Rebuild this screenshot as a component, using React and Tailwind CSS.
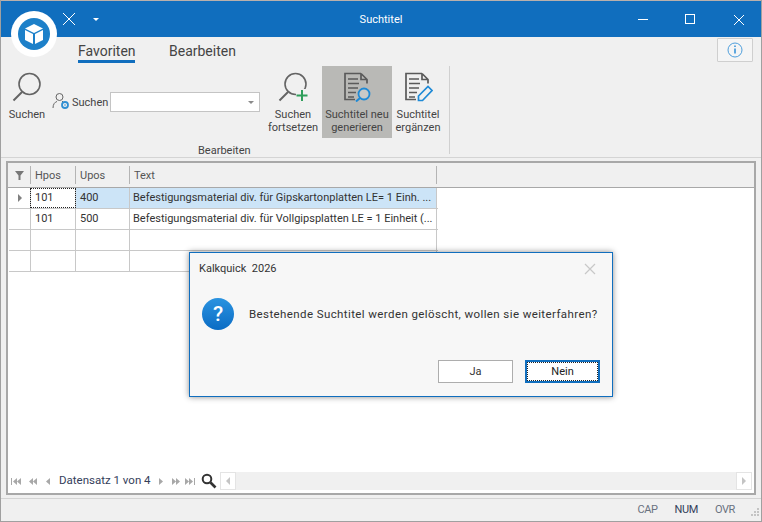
function BigSearch({ plus }) {
  return (
    <svg width="34" height="34" viewBox="0 0 34 34" fill="none">
      <circle cx="19.5" cy="12" r="10.5" stroke="#646464" strokeWidth="1.6" />
      <path d="M12 20L3.500 28.500" stroke="#646464" strokeWidth="2" />
      {plus && <rect x="20" y="17" width="13" height="13" fill="#f0f0f0" />}
      {plus && <path d="M26 18v11M20.500 23.500h11" stroke="#2f9e5b" strokeWidth="2" />}
    </svg>
  );
}

function DocLines() {
  const color = '#5a5a5a';
  return (
    <>
      <path d="M19 1.500H3v26h10M19 1.500l6 6v4M19 1.500v6h6" stroke={color} strokeWidth="1.700" fill="none" />
      <path d="M6 7h10M6 11.500h11M6 16h10M6 20.500h8M6 25h6" stroke={color} strokeWidth="1.500" fill="none" />
    </>
  );
}

function DocSearch() {
  return (
    <svg width="30" height="30" viewBox="0 0 30 30" fill="none">
      <DocLines />
      <circle cx="22" cy="22" r="5.500" fill="#f0f0f0" fillOpacity="0.3" stroke="#1f8ad6" strokeWidth="1.800" />
      <path d="M18 26l-4 3.500" stroke="#1f8ad6" strokeWidth="2" />
    </svg>
  );
}

function DocEdit() {
  return (
    <svg width="30" height="30" viewBox="0 0 30 30" fill="none">
      <DocLines />
      <path d="M15.500 28.500v-4.500l9.500-9.500 4 4-9.500 10z" stroke="#1f8ad6" strokeWidth="1.700" fill="#f0f0f0" />
    </svg>
  );
}

function UserGear() {
  return (
    <svg width="18" height="18" viewBox="0 0 18 18" fill="none">
      <circle cx="7.500" cy="5" r="3.500" stroke="#666" strokeWidth="1" />
      <path d="M1 16c0-4 2-6 4-6.500M10 9.500h1" stroke="#666" strokeWidth="1" />
      <circle cx="13" cy="13" r="3" stroke="#2f8fd3" strokeWidth="1.800" />
      <circle cx="13" cy="13" r="0.800" fill="#2f8fd3" />
    </svg>
  );
}

function RibbonButton({ icon, lines, active, width }) {
  return (
    <div className={`flex flex-col items-center h-[72px] pt-[6px] ${width} ${active ? 'bg-[#b9b9b6]' : ''}`}>
      <div className="h-[34px] flex items-start justify-center">{icon}</div>
      <div className="mt-[2px] text-[11px] leading-[13px] text-center text-[#444] whitespace-nowrap">
        {lines.map((l) => (
          <div key={l}>{l}</div>
        ))}
      </div>
    </div>
  );
}

function Row({ hpos, upos, text, selected, marker }) {
  const bg = selected ? 'bg-[#cce4f7]' : 'bg-white';
  return (
    <div className="flex h-[21px] border-b border-[#c8c8c8]">
      <div className="w-[21px] flex items-center justify-center bg-white">
        {marker && <div className="w-0 h-0 border-y-[4px] border-y-transparent border-l-[4px] border-l-[#808080]" />}
      </div>
      <div className={`w-[46px] border-x border-[#c8c8c8] flex items-center bg-white pt-px ${selected ? 'outline-1 outline-dotted outline-[#222] -outline-offset-1' : ''}`}>
        <span className="pl-[4px]">{hpos}</span>
      </div>
      <div className={`w-[54px] border-r border-[#c8c8c8] flex items-center pt-px ${bg}`}>
        <span className="pl-[4px]">{upos}</span>
      </div>
      <div className={`w-[307px] border-r border-[#c8c8c8] flex items-center pt-px overflow-hidden whitespace-nowrap ${bg}`}>
        <span className="pl-[3px]">{text}</span>
      </div>
    </div>
  );
}

function NavArrow({ d }) {
  return (
    <svg width="12" height="9" viewBox="0 0 12 9" fill="#a8a8a8">
      <path d={d} />
    </svg>
  );
}

export default function App() {
  return (
    <div
      className="relative w-[762px] h-[522px] overflow-hidden flex flex-col bg-[#f0f0f0] border-x border-b border-[#a0a0a0] text-[11px] text-[#444]"
      style={{ fontFamily: 'Roboto, "Noto Sans", sans-serif' }}
    >
      {/* Title bar */}
      <div className="h-px shrink-0 bg-[#b9b0ac]" />
      <div className="h-[36px] shrink-0 bg-[#106ebe] flex items-center text-white">
        <div className="w-[56px]" />
        <svg width="14" height="14" viewBox="0 0 14 14" className="ml-[5px]" fill="none">
          <path d="M1 1l12 12M13 1L1 13" stroke="#fff" strokeWidth="1" />
        </svg>
        <div className="ml-[17px] w-0 h-0 border-x-[3px] border-x-transparent border-t-[3px] border-t-white" />
        <div className="flex-1 text-center text-[11px] pt-[2px] pr-[98px]">Suchtitel</div>
        <div className="absolute right-0 top-px h-[36px] flex items-center">
          <svg width="140" height="36" viewBox="0 0 140 36" fill="none">
            <path d="M17 18.500h10" stroke="#fff" />
            <rect x="64.500" y="13.500" width="9" height="9" stroke="#fff" />
            <path d="M113 14l10 10M123 14l-10 10" stroke="#fff" />
          </svg>
        </div>
      </div>

      {/* Tabs */}
      <div className="h-[29px] shrink-0 flex items-start pl-[77px] text-[14px] text-[#444]">
        <div className="h-[26px] w-[57px] text-center whitespace-nowrap border-b-[3px] border-[#106ebe] pt-[5px] leading-[19px]">Favoriten</div>
        <div className="ml-[34px] pt-[5px] leading-[19px]">Bearbeiten</div>
        <div className="ml-auto mr-[8px] mt-[1px] w-[36px] h-[24px] border border-[#cfcfcf] rounded-[1px] bg-[#f5f5f5] flex items-center justify-center">
          <svg width="16" height="16" viewBox="0 0 16 16" fill="none">
            <circle cx="8" cy="8" r="7" stroke="#4f9fdc" strokeWidth="1" />
            <path d="M8 6.500v5" stroke="#4f9fdc" strokeWidth="1.800" />
            <path d="M8 3.500v1.500" stroke="#4f9fdc" strokeWidth="1.800" />
          </svg>
        </div>
      </div>

      {/* Ribbon */}
      <div className="h-[92px] shrink-0 flex border-b border-[#d4d4d4]">
        <div className="w-[449px] flex flex-col border-r border-[#d0d0d0] mb-[3px]">
          <div className="flex pl-[7px]">
            <RibbonButton icon={<BigSearch />} lines={['Suchen']} width="w-[38px]" />
            <div className="flex items-start pt-[26px]">
              <div className="ml-[6px]"><UserGear /></div>
              <span className="ml-[2px] w-[36px] pt-px leading-[19px] text-[#444]">Suchen</span>
              <div className="ml-[2px] w-[150px] h-[20px] bg-white border border-[#c4c4c4] flex items-center justify-end pr-[5px]">
                <div className="w-0 h-0 border-x-[3px] border-x-transparent border-t-[3px] border-t-[#8a8a8a]" />
              </div>
            </div>
            <RibbonButton icon={<BigSearch plus />} lines={['Suchen', 'fortsetzen']} width="ml-[4px] w-[58px]" />
            <RibbonButton icon={<DocSearch />} lines={['Suchtitel neu', 'generieren']} active width="w-[70px]" />
            <RibbonButton icon={<DocEdit />} lines={['Suchtitel', 'ergänzen']} width="w-[52px]" />
          </div>
          <div className="mt-[6px] pl-[197px] leading-[14px] text-[#444]">Bearbeiten</div>
        </div>
      </div>

      {/* Grid */}
      <div className="flex-1 mx-[5px] mt-[3px] mb-[3px] border-2 border-double border-[#a8a8a8] bg-white flex flex-col min-h-0">
        <div className="flex h-[25px] bg-[#f0f0f0] border-b border-[#a8a8a8] text-[#555] shrink-0 pl-px">
          <div className="w-[21px] flex items-center justify-center">
            <svg width="9" height="9" viewBox="0 0 9 9" fill="#777">
              <path d="M0 0h9L5.500 4.500V9h-2V4.500z" />
            </svg>
          </div>
          {[['Hpos', 'w-[45px]'], ['Upos', 'w-[54px]'], ['Text', 'w-[307px]']].map(([label, w]) => (
            <div key={label} className={`${w} border-l border-[#b4b4b4] my-[3px] pl-[4px] pt-[2px] flex items-center`}>{label}</div>
          ))}
          <div className="border-l border-[#b4b4b4] my-[3px]" />
        </div>
        <div className="flex-1 pl-px text-[#333] w-[430px]">
          <Row hpos="101" upos="400" text="Befestigungsmaterial div. für Gipskartonplatten LE= 1 Einh. ..." selected marker />
          <Row hpos="101" upos="500" text="Befestigungsmaterial div. für Vollgipsplatten LE = 1 Einheit (..." />
          <Row />
          <Row />
        </div>
        <div className="h-[20px] shrink-0 flex items-center px-[2px] mb-[2px]">
          <NavArrow d="M1 1h1v7H1zM7 1v7L3 4.500zM11 1v7L7 4.500z" />
          <div className="w-[5px]" />
          <NavArrow d="M6 1v7L2 4.500zM10 1v7L6 4.500z" />
          <div className="w-[3px]" />
          <NavArrow d="M8 1v7L4 4.500z" />
          <span className="ml-[5px] w-[90px] whitespace-nowrap text-[11.5px] text-[#34405a]">Datensatz 1 von 4</span>
          <div className="w-[6px]" />
          <NavArrow d="M4 1v7l4-3.500z" />
          <div className="w-[3px]" />
          <NavArrow d="M2 1v7l4-3.500zM6 1v7l4-3.500z" />
          <div className="w-[2px]" />
          <NavArrow d="M1 1v7l4-3.500zM5 1v7l4-3.500zM10 1h1v7h-1z" />
          <svg width="16" height="16" viewBox="0 0 16 16" fill="none" className="ml-[5px]">
            <circle cx="6" cy="6" r="4.300" stroke="#333" strokeWidth="2" />
            <path d="M9.500 9.500L14.500 14.500" stroke="#333" strokeWidth="2.600" />
          </svg>
          <div className="ml-[3px] flex-1 h-[18px] bg-[#f0f0f0] flex justify-between">
            <div className="w-[16px] bg-white border border-[#e4e4e4] flex items-center justify-center">
              <div className="w-0 h-0 border-y-[4px] border-y-transparent border-r-[4px] border-r-[#c4c4c4]" />
            </div>
            <div className="w-[16px] bg-white border border-[#e4e4e4] flex items-center justify-center">
              <div className="w-0 h-0 border-y-[4px] border-y-transparent border-l-[4px] border-l-[#c4c4c4]" />
            </div>
          </div>
        </div>
      </div>

      {/* Status bar */}
      <div className="h-[23px] shrink-0 border-t border-[#d4d4d4] pt-px flex items-center justify-end pr-[26px] gap-[17px] text-[11px] tracking-[-0.4px] text-[#6a7280]">
        <span>CAP</span>
        <span className="text-[#34405a]">NUM</span>
        <span>OVR</span>
      </div>
      <svg width="12" height="12" viewBox="0 0 12 12" fill="#c4c4c4" className="absolute right-[1px] bottom-[2px]">
        <path d="M9 1h2v2H9zM6 4h2v2H6zM9 4h2v2H9zM3 7h2v2H3zM6 7h2v2H6zM9 7h2v2H9z" />
      </svg>

      {/* Logo over the title bar */}
      <div className="absolute left-[10px] top-[11px] w-[46px] h-[46px] rounded-full bg-white flex items-center justify-center">
        <div className="w-[32px] h-[32px] rounded-full bg-[#1d80c9] flex items-center justify-center">
          <svg width="24" height="24" viewBox="0 0 24 24" fill="none">
            <path d="M12 2l9 4.500-9 4.500-9-4.500z" fill="#fff" />
            <path d="M3 8l8 4v10l-8-4zM21 8l-8 4v10l8-4z" fill="#fff" />
            <path d="M12 11v11" stroke="#1d80c9" strokeWidth="1.500" />
          </svg>
        </div>
      </div>

      {/* Message box */}
      <div className="absolute left-[188px] top-[252px] w-[424px] h-[145px] border border-[#106ebe] bg-[#f7f7f7] shadow-[0_0_6px_rgba(0,0,0,0.45)] flex flex-col">
        <div className="h-[28px] flex items-center justify-between pl-[9px] pr-[16px] pt-[4px] text-[#333]">
          <span className="whitespace-pre">Kalkquick  2026</span>
          <svg width="12" height="12" viewBox="0 0 12 12" fill="none">
            <path d="M1 1l10 10M11 1L1 11" stroke="#c8c8c8" strokeWidth="1.200" />
          </svg>
        </div>
        <div className="flex items-center pl-[12px] mt-[17px]">
          <div className="w-[32px] h-[32px] rounded-full bg-gradient-to-b from-[#2a93e0] to-[#0a6cc4] flex items-center justify-center text-white text-[21px] font-medium leading-none">?</div>
          <span className="ml-[15px] pt-[2px] text-[11.5px] tracking-[0.4px] text-[#333]">Bestehende Suchtitel werden gelöscht, wollen sie weiterfahren?</span>
        </div>
        <div className="flex justify-end gap-[12px] pr-[12px] mt-[30px]">
          <button className="w-[75px] h-[23px] pt-px bg-white border border-[#adadad] text-[#333]">Ja</button>
          <button className="w-[75px] h-[23px] pt-px bg-white border-2 border-[#106ebe] text-[#222] outline-1 outline-dotted outline-[#222] -outline-offset-3">Nein</button>
        </div>
      </div>
    </div>
  );
}
